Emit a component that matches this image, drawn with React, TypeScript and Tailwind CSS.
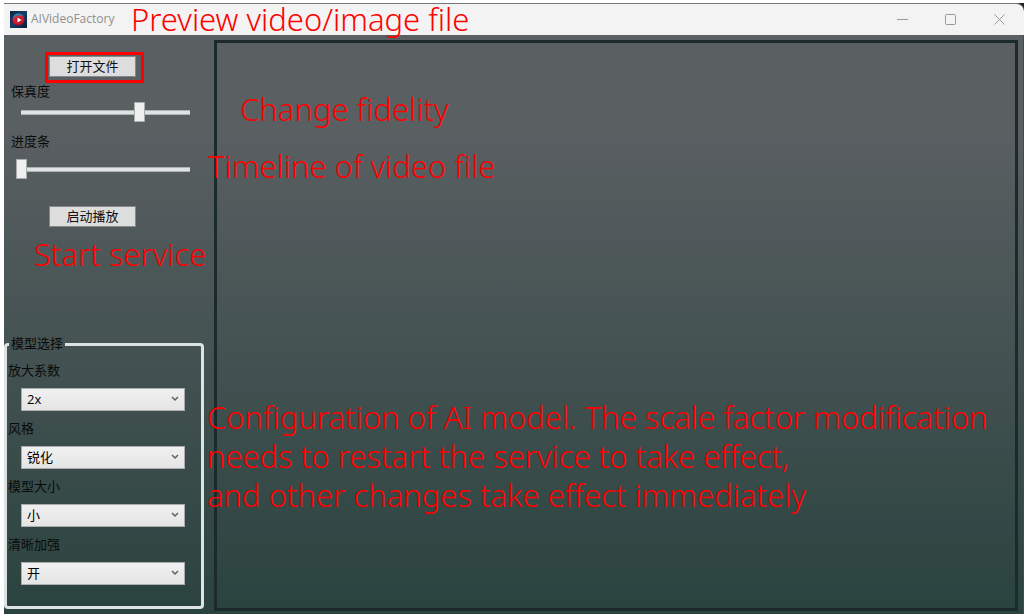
import { useState } from 'react';

const buttonStyle =
  'block h-[21px] w-[87px] border border-[#858989] bg-[#dddddd] text-[13px] leading-[18px] text-[#111]';

function Slider({ id, label, start, gap }: { id: string; label: string; start: number; gap: string }) {
  const [value, setValue] = useState(start);
  return (
    <div className={'flex flex-col ' + gap}>
      <label htmlFor={id} className="pl-[7px] text-[13px] leading-5 text-[#0a0a0a]">
        {label}
      </label>
      <input
        id={id}
        type="range"
        min={0}
        max={100}
        value={value}
        onChange={(e) => setValue(Number(e.target.value))}
        className="mr-[9px] ml-3 h-5 appearance-none bg-[linear-gradient(#b0b3b4_1px,#e0e3e3_1px,#e0e3e3_4px,#b0b3b4_4px)] bg-[length:calc(100%-10px)_5px] bg-center bg-no-repeat [&::-webkit-slider-thumb]:h-5 [&::-webkit-slider-thumb]:w-[11px] [&::-webkit-slider-thumb]:appearance-none [&::-webkit-slider-thumb]:border [&::-webkit-slider-thumb]:border-[#acacac] [&::-webkit-slider-thumb]:bg-[#f0f0f0]"
      />
    </div>
  );
}

function Choice({ id, label, options }: { id: string; label: string; options: string[] }) {
  return (
    <div className="flex flex-col gap-[7px]">
      <label htmlFor={id} className="text-[13px] leading-5 text-[#0a0a0a]">
        {label}
      </label>
      <div className="relative mr-4 ml-[13px]">
        <select
          id={id}
          className="block h-[23px] w-full appearance-none border border-[#acacac] bg-linear-to-b from-[#f0f0f0] to-[#e5e5e5] pl-[5px] font-['Open_Sans','Noto_Sans_CJK_SC',sans-serif] text-[13px] text-black"
        >
          {options.map((o) => (
            <option key={o}>{o}</option>
          ))}
        </select>
        <svg
          viewBox="0 0 8 6"
          className="pointer-events-none absolute top-2 right-[6px] h-[6px] w-2"
          fill="none"
          stroke="#606060"
          strokeWidth="1.5"
        >
          <path d="M1 1l3 3 3-3" />
        </svg>
      </div>
    </div>
  );
}

function Logo() {
  return (
    <svg viewBox="0 0 17 17" className="h-[17px] w-[17px]">
      <defs>
        <radialGradient id="ball" cx="0.4" cy="0.3" r="0.8">
          <stop offset="0" stopColor="#c93444" />
          <stop offset="0.6" stopColor="#d9162a" />
          <stop offset="1" stopColor="#52142f" />
        </radialGradient>
        <linearGradient id="sky" x1="0" y1="0" x2="1" y2="1">
          <stop offset="0" stopColor="#0a2743" />
          <stop offset="0.5" stopColor="#153d66" />
          <stop offset="1" stopColor="#071a36" />
        </linearGradient>
      </defs>
      <rect width="17" height="17" fill="url(#sky)" />
      <circle cx="8.5" cy="8.8" r="6" fill="url(#ball)" />
      <path d="M2.5 8C3 4 6 2 9.5 2.5C12 3 13 4 13.5 5.5C10 3.5 6 4 2.5 8z" fill="#2c80b5" />
      <circle cx="9" cy="9" r="3.2" fill="#c41a31" />
      <path d="M7.5 6.5v5l4-2.5z" fill="#fff" />
    </svg>
  );
}

function TitleBar() {
  return (
    <div className="bg-linear-to-r from-white from-95% to-[#222] to-95%">
      <header className="flex h-8 items-center rounded-tr-lg border-t border-[#777] bg-[#f3f3f3] pb-px pl-[6px]">
        <Logo />
        <h1 className="ml-1 flex-1 font-['Open_Sans',sans-serif] text-[12px] text-[#8f8f8f]">AIVideoFactory</h1>
        <div className="flex text-[#999]">
          <button aria-label="Minimize" className="flex h-7 w-12 items-center justify-center">
            <svg viewBox="0 0 11 11" className="h-[11px] w-[11px]" fill="none" stroke="currentColor">
              <path d="M0 5.5h11" />
            </svg>
          </button>
          <button aria-label="Maximize" className="flex h-7 w-12 items-center justify-center">
            <svg viewBox="0 0 11 11" className="h-[11px] w-[11px]" fill="none" stroke="currentColor">
              <rect x="0.5" y="0.5" width="10" height="10" rx="1" />
            </svg>
          </button>
          <button aria-label="Close" className="flex h-7 w-[50px] items-center justify-center">
            <svg viewBox="0 0 11 11" className="h-[11px] w-[11px]" fill="none" stroke="currentColor">
              <path d="M0.5 0.5l10 10M10.5 0.5l-10 10" />
            </svg>
          </button>
        </div>
      </header>
    </div>
  );
}

const noteStyle =
  "pointer-events-none absolute whitespace-nowrap font-['Noto_Sans',sans-serif] text-[31px] leading-[39px] font-light text-[#ff0000]";

export default function App() {
  return (
    <div className="relative flex min-h-screen flex-col bg-white pt-[3px] pl-1 font-['Liberation_Sans','Noto_Sans_CJK_SC',sans-serif]">
      <TitleBar />
      <main className="flex flex-1 border-r border-[#454a4c] bg-[linear-gradient(#5a5f62,#5a5f62_16%,#2a433f)]">
        <aside className="flex w-[200px] flex-col pb-[5px]">
          <div className="mt-[17px] ml-[41px] self-start border-[3px] border-[#ff0000] pt-px pr-[5px] pb-[3px] pl-px">
            <button className={buttonStyle}>打开文件</button>
          </div>
          <Slider id="fidelity" label="保真度" start={70} gap="-mt-px" />
          <Slider id="progress" label="进度条" start={0} gap="mt-[10px] gap-[7px]" />
          <button className={buttonStyle + ' mt-[27px] ml-[45px]'}>启动播放</button>
          <fieldset className="mt-auto h-[275px] rounded-[4px] border-[3px] border-[#dce3e4] pl-px">
            <legend className="ml-px px-[2px] text-[13px] leading-5 text-[#0a0a0a]">模型选择</legend>
            <div className="flex flex-col gap-2 pt-[7px]">
              <Choice id="scale" label="放大系数" options={['2x', '4x']} />
              <Choice id="style" label="风格" options={['锐化']} />
              <Choice id="size" label="模型大小" options={['小', '大']} />
              <Choice id="sharpen" label="清晰加强" options={['开', '关']} />
            </div>
          </fieldset>
        </aside>
        <section aria-label="Preview" className="mt-[5px] mr-[5px] mb-[3px] ml-[10px] flex-1 border-[3px] border-[#1b2b2b]" />
      </main>
      <p className={noteStyle + ' top-0 left-[131px]'}>Preview video/image file</p>
      <p className={noteStyle + ' top-[90px] left-[240px]'}>Change fidelity</p>
      <p className={noteStyle + ' top-[147px] left-[208px]'}>Timeline of video file</p>
      <p className={noteStyle + ' top-[235px] left-[34px]'}>Start service</p>
      <p className={noteStyle + ' top-[398px] left-[207px]'}>
        Configuration of AI model. The scale factor modification
        <br />
        needs to restart the service to take effect,
        <br />
        and other changes take effect immediately
      </p>
    </div>
  );
}
